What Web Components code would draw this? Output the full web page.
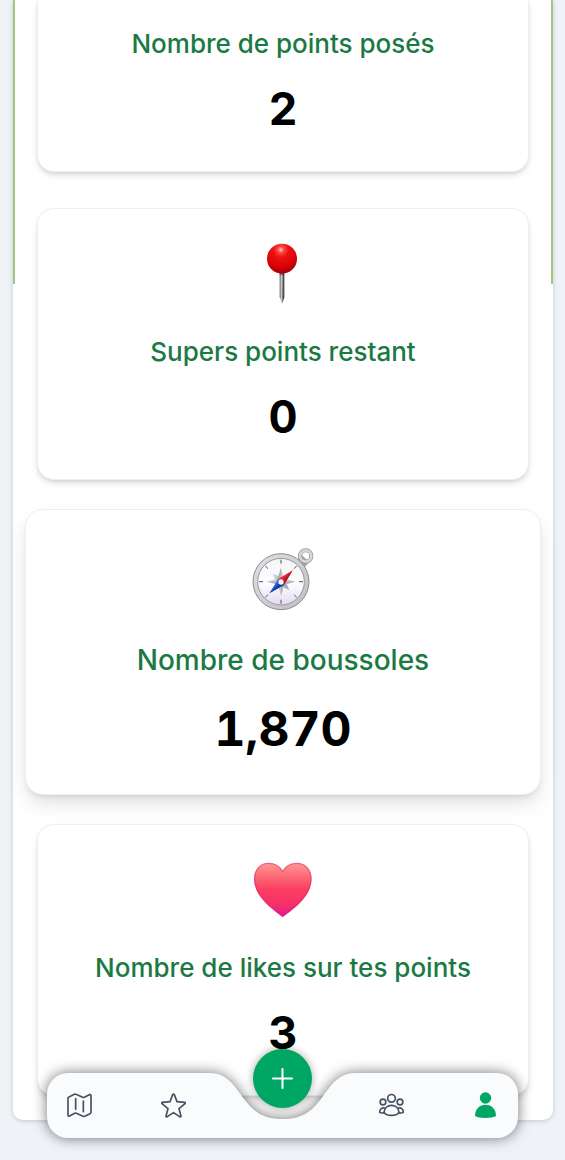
<!DOCTYPE html>
<html lang="fr">
<head>
<meta charset="utf-8">
<meta name="viewport" content="width=device-width, initial-scale=1">
<title>Profil</title>
<style>
    body {
        margin: 0;
        background: #eff3f8;
        font-family: Inter, "Liberation Sans", sans-serif;
    }
</style>
</head>
<body>
<stats-panel>
    <stat-card label="Nombre de points posés" value="2" cut></stat-card>
    <stat-card label="Supers points restant" value="0">
        <svg slot="icon" viewBox="32 30 192 192" aria-hidden="true">
            <defs>
                <radialGradient id="ball" cx=".46" cy=".2" r=".8">
                    <stop offset="0" stop-color="#ffd0c8"/>
                    <stop offset=".13" stop-color="#fb4a44"/>
                    <stop offset=".32" stop-color="#ee1010"/>
                    <stop offset=".7" stop-color="#d90408"/>
                    <stop offset="1" stop-color="#a50008"/>
                </radialGradient>
            </defs>
            <path d="M118 124h14v78l-7 20-7-20z" fill="#c9c9c9"/>
            <path d="M118 124h3v82l-3-6z" fill="#777"/>
            <path d="M127 124h5v78l-6 18z" fill="#4c4c4c"/>
            <path d="M118 124h14v12h-14z" fill="#333" opacity=".5"/>
            <circle cx="125" cy="86" r="45" fill="url(#ball)"/>
        </svg>
    </stat-card>
    <stat-card label="Nombre de boussoles" value="1,870" raised>
        <svg slot="icon" viewBox="30 28 198 198" aria-hidden="true">
            <defs>
                <linearGradient id="face" x1="0" y1="0" x2="0" y2="1">
                    <stop offset="0" stop-color="#f5f5f7"/>
                    <stop offset=".55" stop-color="#fdfcff"/>
                    <stop offset="1" stop-color="#e2daf2"/>
                </linearGradient>
                <linearGradient id="ring" x1="0" y1="0" x2="1" y2="1">
                    <stop offset="0" stop-color="#e2e2e4"/>
                    <stop offset="1" stop-color="#bcbcc2"/>
                </linearGradient>
            </defs>
            <path d="M174 70l12-10 20 18-10 14z" fill="#aaa" stroke="#909094" stroke-width="2"/>
            <circle cx="197" cy="61" r="17" fill="none" stroke="#909094" stroke-width="12"/>
            <circle cx="197" cy="61" r="17" fill="none" stroke="#d6d6d9" stroke-width="8"/>
            <circle cx="123" cy="138" r="84" fill="url(#ring)" stroke="#8c8c92" stroke-width="3"/>
            <circle cx="123" cy="138" r="70" fill="url(#face)" stroke="#98989e" stroke-width="3"/>
            <path d="M123 72v12M123 192v12M57 138h12M177 138h12M76 91l8 8M162 177l8 8M76 185l8-8M162 99l8-8" stroke="#55555a" stroke-width="3"/>
            <path d="M123 96l7 25 18-7-8 17 26 7-26 7 8 18-18-8-7 26-7-26-18 8 8-18-26-7 26-7-8-17 18 7z" fill="#c8cbd0"/>
            <path d="M123 96v84l7-25 18 8-8-18 26-7H82l26 7-8 18z" fill="#96999f" opacity=".55"/>
            <path d="M158 104l-26 44-17-18z" fill="#ed2330"/>
            <path d="M158 104l-35 34 9 10z" fill="#b61532"/>
            <path d="M88 173l27-43 17 18z" fill="#1a60de"/>
            <path d="M88 173l35-35 9 10z" fill="#123d9d"/>
            <circle cx="123" cy="139" r="8" fill="#f4f4f6"/>
        </svg>
    </stat-card>
    <stat-card label="Nombre de likes sur tes points" value="3">
        <svg slot="icon" viewBox="32 18 192 192" aria-hidden="true">
            <defs>
                <linearGradient id="love" x1="0" y1="0" x2="0" y2="1">
                    <stop offset="0" stop-color="#ff9a98"/>
                    <stop offset=".25" stop-color="#fd6b76"/>
                    <stop offset=".5" stop-color="#fb3d62"/>
                    <stop offset=".78" stop-color="#f5306a"/>
                    <stop offset="1" stop-color="#e3169d"/>
                </linearGradient>
            </defs>
            <path d="M127 201C112 187 41 145 41 86c0-29 19-48 43-48 19 0 35 9 43 25 8-16 24-25 43-25 25 0 44 19 44 48 0 59-71 101-87 115z" fill="url(#love)"/>
            <path d="M127 200C112 186 43 145 43 87c0-28 18-47 41-47 19 0 35 9 43 25 8-16 24-25 43-25 24 0 42 19 42 47 0 58-69 99-85 113z" fill="none" stroke="#d8205a" stroke-width="4" opacity=".4"/>
        </svg>
    </stat-card>
</stats-panel>
<tab-bar></tab-bar>

<script>
class StatsPanel extends HTMLElement {
    connectedCallback() {
        this.attachShadow({ mode: "open" }).innerHTML = `
            <style>
                :host {
                    display: block;
                    padding: 0 12px 40px 13px;
                }
                main {
                    position: relative;
                    display: flex;
                    flex-direction: column;
                    gap: 36px;
                    padding: 0 24px;
                    padding-bottom: 24px;
                    background: #fff;
                    border-radius: 0 0 10px 10px;
                    box-shadow: 0 1px 5px rgba(0, 0, 0, .18);
                }
                /* lower end of the green frame around the profile header */
                main::before {
                    content: "";
                    position: absolute;
                    inset: 0 0 auto;
                    height: 284px;
                    border: solid #a2c783;
                    border-width: 0 2px;
                    box-sizing: border-box;
                    pointer-events: none;
                }
            </style>
            <main><slot></slot></main>
        `;
    }
}

class StatCard extends HTMLElement {
    connectedCallback() {
        this.attachShadow({ mode: "open" }).innerHTML = `
            <style>
                :host {
                    display: flex;
                    flex-direction: column;
                    align-items: center;
                    box-sizing: border-box;
                    padding: 31px 8px 35px;
                    border: 1px solid #e3f5ec;
                    border-radius: 17px;
                    background: #fff;
                    text-align: center;
                    box-shadow: 0 4px 7px -1px rgba(0, 0, 0, .13), 0 2px 4px -2px rgba(0, 0, 0, .13);
                }
                :host([cut]) {
                    padding-top: 26px;
                    border-top: 0;
                    border-radius: 0 0 17px 17px;
                }
                ::slotted(svg) {
                    display: block;
                    width: 64px;
                    height: 64px;
                    margin-bottom: 30px;
                }
                h3 {
                    margin: 0 0 20px;
                    color: #1b7a43;
                    font-size: 26px;
                    font-weight: 500;
                    line-height: 36px;
                }
                p {
                    margin: 0;
                    color: #000;
                    font-size: 45px;
                    font-weight: 700;
                    line-height: 54px;
                    font-variant-numeric: tabular-nums;
                }
                :host([raised]) {
                    position: relative;
                    margin: -7px -12px;
                    padding: 35px 8px 37px;
                    border-radius: 18px;
                    box-shadow: 0 10px 20px -2px rgba(0, 0, 0, .12), 0 4px 7px -4px rgba(0, 0, 0, .14);
                }
                :host([raised]) ::slotted(svg) {
                    width: 66px;
                    height: 66px;
                }
                :host([raised]) h3 {
                    margin-bottom: 21px;
                    font-size: 28px;
                    line-height: 38px;
                }
                :host([raised]) p {
                    font-size: 48px;
                    line-height: 57px;
                }
            </style>
            <slot name="icon"></slot>
            <h3></h3>
            <p></p>
        `;
        this.shadowRoot.querySelector("h3").textContent = this.getAttribute("label");
        this.shadowRoot.querySelector("p").textContent = this.getAttribute("value");
    }
}

class TabBar extends HTMLElement {
    connectedCallback() {
        this.attachShadow({ mode: "open" }).innerHTML = `
            <style>
                :host {
                    display: block;
                    position: fixed;
                    left: 47px;
                    right: 47px;
                    bottom: 22px;
                    z-index: 2;
                }
                nav {
                    display: flex;
                    height: 65px;
                    filter: drop-shadow(0 0 7px rgba(0, 0, 0, .55));
                }
                .side {
                    flex: 1;
                    display: flex;
                    align-items: center;
                    justify-content: space-between;
                    background: #f9fbfd;
                    color: #465160;
                }
                .left {
                    padding: 0 21px 0 20px;
                    border-radius: 21px 0 0 21px;
                }
                .right {
                    padding: 0 20px 0 21px;
                    border-radius: 0 21px 21px 0;
                }
                .notch {
                    display: block;
                    width: 151px;
                    height: 65px;
                    fill: #f9fbfd;
                }
                a {
                    display: block;
                    color: inherit;
                }
                a svg {
                    display: block;
                    width: 25px;
                    height: 25px;
                    fill: none;
                    stroke: currentColor;
                    stroke-width: 5;
                    stroke-linejoin: round;
                    stroke-linecap: round;
                }
                a.active {
                    color: #00a663;
                }
                a.active svg {
                    fill: currentColor;
                    stroke: none;
                    overflow: visible;
                }
                /* floats over the notch */
                button {
                    position: absolute;
                    top: -24px;
                    left: calc(50% - 30px);
                    display: grid;
                    place-items: center;
                    width: 59px;
                    height: 59px;
                    padding: 0;
                    border: 0;
                    border-radius: 50%;
                    background: #00a663;
                    box-shadow: 0 0 8px rgba(0, 0, 0, .35);
                }
                button svg {
                    width: 21px;
                    height: 21px;
                    stroke: #fff;
                    stroke-width: 2;
                    stroke-linecap: round;
                }
            </style>
            <nav>
                <div class="side left">
                    <a href="#carte" aria-label="Carte">
                        <svg viewBox="0 0 75 75"><path d="M3 16q0-3 3-4L22 4q3-1 5 0l20 9q3 1 5 0L67 5q5-1 5 3v50q0 3-3 4l-16 8q-3 1-5 0l-20-9q-3-1-5 0L8 69q-5 1-5-3zM26 17v32M49 24v32"/></svg>
                    </a>
                    <a href="#favoris" aria-label="Favoris">
                        <svg viewBox="0 0 75 75"><path d="M35 5q2.500-4 5 0l8 21 23 2q3 1 1 4L54 47l6 22q0 4-4 2L37.500 59 19 71q-4 2-4-2l6-22L3 32q-2-3 1-4l23-2z"/></svg>
                    </a>
                </div>
                <svg class="notch" viewBox="0 0 151 65" aria-hidden="true"><path d="M0 0h3C19 0 27 12 37 26 47 39 56 46 75.500 46S104 39 114 26C124 12 132 0 148 0h3v65H0z"/></svg>
                <div class="side right">
                    <a href="#groupes" aria-label="Groupes">
                        <svg viewBox="0 0 75 75"><circle cx="37.500" cy="16" r="11.500"/><circle cx="12" cy="27" r="8.500"/><circle cx="63" cy="27" r="8.500"/><path d="M15 58c1-12 10-21 22.500-21S59 46 60 58c-6 12-39 12-45 0zM19 46C9 42 2 48 2 58c4 3 6 3 13 1M56 46c10-4 17 2 17 12-4 3-6 3-13 1"/></svg>
                    </a>
                    <a class="active" href="#profil" aria-label="Profil" aria-current="page">
                        <svg viewBox="0 0 75 75"><circle cx="37.500" cy="15" r="17"/><path d="M6 69c0-20 13-34 31.500-34S69 49 69 69c-10 8-53 8-63 0z"/></svg>
                    </a>
                </div>
            </nav>
            <button type="button" aria-label="Ajouter un point">
                <svg viewBox="0 0 21 21"><path d="M10.500 1v19M1 10.500h19"/></svg>
            </button>
        `;
    }
}

customElements.define("stats-panel", StatsPanel);
customElements.define("stat-card", StatCard);
customElements.define("tab-bar", TabBar);
</script>
</body>
</html>
